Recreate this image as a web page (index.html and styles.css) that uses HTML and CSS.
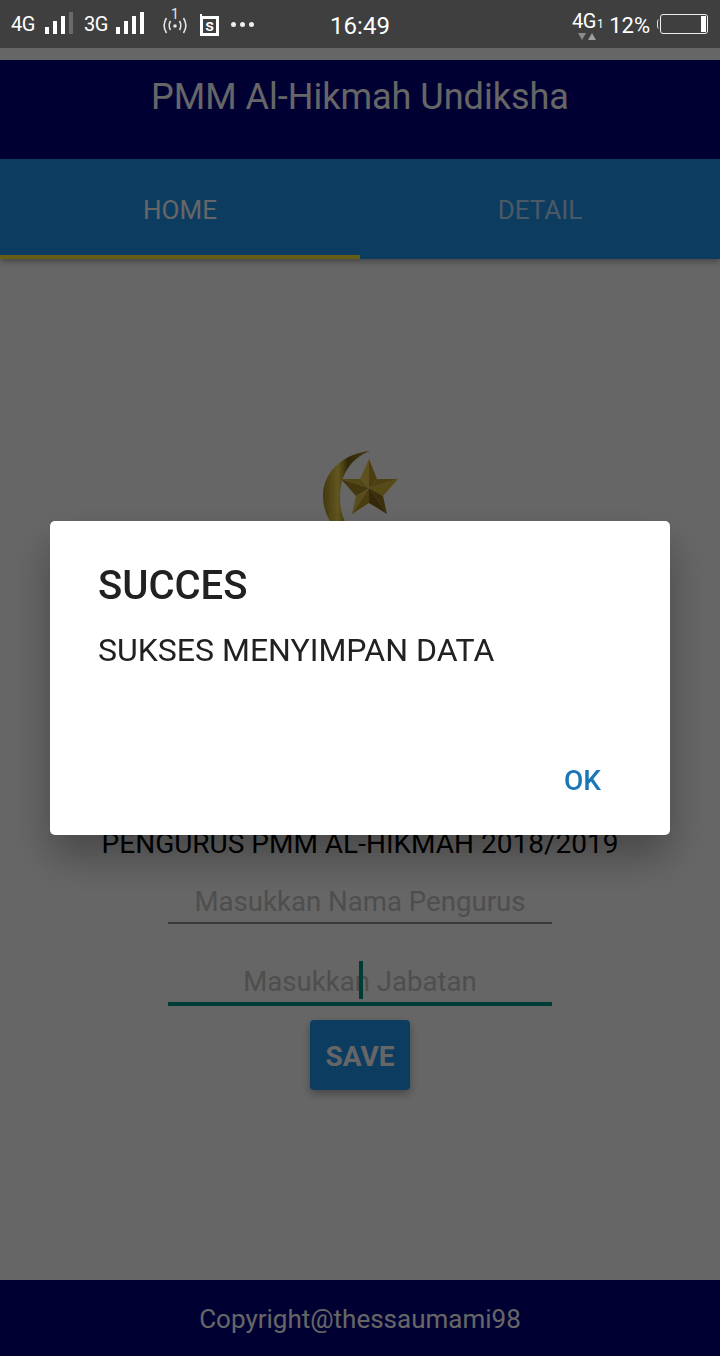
FILE: index.html
```html
<!DOCTYPE html>
<html lang="en">
<head>
    <meta charset="UTF-8">
    <meta name="viewport" content="width=device-width, initial-scale=1.0">
    <title>PMM Al-Hikmah Undiksha</title>
    <link rel="stylesheet" href="styles.css">
</head>
<body>
    <div class="status-bar">
        <div class="status-left">
            <span class="net">4G</span>
            <svg class="bars" width="28" height="24" viewBox="0 0 28 24">
                <rect x="0" y="15" width="4" height="7" fill="#fff"/>
                <rect x="8" y="9" width="4" height="13" fill="#fff"/>
                <rect x="16" y="4" width="4" height="18" fill="#fff"/>
                <rect x="24" y="0" width="4" height="22" fill="#6a6a6a"/>
            </svg>
            <span class="net net-3g">3G</span>
            <svg class="bars" width="28" height="24" viewBox="0 0 28 24">
                <rect x="0" y="15" width="4" height="7" fill="#fff"/>
                <rect x="8" y="9" width="4" height="13" fill="#fff"/>
                <rect x="16" y="4" width="4" height="18" fill="#fff"/>
                <rect x="24" y="0" width="4" height="22" fill="#fff"/>
            </svg>
            <span class="hotspot">
                <svg width="28" height="24" viewBox="0 0 28 24" fill="none" stroke="#e6e6e6" stroke-width="1.6">
                    <path d="M5.5 5a14 14 0 0 0 0 15"/>
                    <path d="M9.5 8a9 9 0 0 0 0 9"/>
                    <path d="M22.5 5a14 14 0 0 1 0 15"/>
                    <path d="M18.5 8a9 9 0 0 1 0 9"/>
                    <circle cx="14" cy="13" r="1.8" fill="#e6e6e6" stroke="none"/>
                </svg>
                <span class="hotspot-num">1</span>
            </span>
            <span class="s-box">s</span>
            <span class="dots"><i></i><i></i><i></i></span>
        </div>
        <div class="status-time">16:49</div>
        <div class="status-right">
            <span class="sim">
                4G<small>1</small>
                <svg class="sim-arrows" width="18" height="8" viewBox="0 0 18 8">
                    <path d="M0 0h8l-4 7z" fill="#8a8a8a"/>
                    <path d="M10 7h8l-4-7z" fill="#a0a0a0"/>
                </svg>
            </span>
            <span class="batt-text">12%</span>
            <span class="batt-tip"></span>
            <span class="batt"><span class="batt-level"></span></span>
        </div>
    </div>

    <div class="page">
        <header class="app-bar">PMM Al-Hikmah Undiksha</header>
        <nav class="tabs">
            <div class="tab active">HOME</div>
            <div class="tab">DETAIL</div>
        </nav>

        <main class="content">
            <svg class="logo" width="100" height="100" viewBox="0 0 100 100">
                <defs>
                    <linearGradient id="moon" x1="0" y1="0" x2="1" y2="0">
                        <stop offset="0" stop-color="#a88c26"/>
                        <stop offset="0.3" stop-color="#f5d94e"/>
                        <stop offset="0.5" stop-color="#7d6618"/>
                        <stop offset="1" stop-color="#b89a28"/>
                    </linearGradient>
                </defs>
                <path d="M60 1C36 3 13 20 13 46s21 49 50 49c-21-5-33-24-33-47S40 9 60 1z" fill="url(#moon)"/>
                <path d="M59 9L59 38 67 29z" fill="#b89a2a"/>
                <path d="M59 9L59 38 50 29z" fill="#e8cb50"/>
                <path d="M88 29L59 38 67 29z" fill="#c4a42c"/>
                <path d="M88 29L59 38 73 46z" fill="#d8b838"/>
                <path d="M77 64L59 38 73 46z" fill="#94781c"/>
                <path d="M77 64L59 38 59 53z" fill="#7f6616"/>
                <path d="M42 64L59 38 59 53z" fill="#b89a2a"/>
                <path d="M42 64L59 38 46 46z" fill="#e0c148"/>
                <path d="M31 29L59 38 46 46z" fill="#a88a22"/>
                <path d="M31 29L59 38 50 29z" fill="#d2b238"/>
            </svg>
            <h2 class="title">PENGURUS PMM AL-HIKMAH 2018/2019</h2>
            <input class="field" type="text" placeholder="Masukkan Nama Pengurus">
            <div class="field-wrap">
                <input class="field field-focus" type="text" placeholder="Masukkan Jabatan">
                <span class="caret"></span>
            </div>
            <button class="save-btn">SAVE</button>
        </main>

        <footer class="footer">Copyright@thessaumami98</footer>
    </div>

    <div class="scrim">
        <div class="dialog">
            <h3 class="dialog-title">SUCCES</h3>
            <p class="dialog-msg">SUKSES MENYIMPAN DATA</p>
            <div class="dialog-actions">
                <button class="ok-btn">OK</button>
            </div>
        </div>
    </div>
</body>
</html>
```

FILE: styles.css
```css
* {
    box-sizing: border-box;
}

body {
    font-family: Roboto, "Liberation Sans", sans-serif;
    margin: 0;
    padding: 0;
    width: 720px;
    height: 1356px;
    overflow: hidden;
    background-color: #fff;
    display: flex;
    flex-direction: column;
}

/* status bar */
.status-bar {
    position: relative;
    z-index: 2;
    height: 48px;
    flex: none;
    background-color: #3f3f3f;
    color: #fff;
    display: grid;
    grid-template-columns: 1fr auto 1fr;
    align-items: center;
}

.status-left {
    display: flex;
    align-items: center;
    padding-left: 11px;
}

.net {
    font-size: 20px;
    width: 26px;
    letter-spacing: -0.5px;
}

.net-3g {
    margin-left: 11px;
    width: 24px;
}

.bars {
    margin-left: 8px;
}

.hotspot {
    position: relative;
    margin-left: 17px;
    width: 28px;
    height: 24px;
    margin-top: 2px;
}

.hotspot-num {
    position: absolute;
    left: 10px;
    top: -7px;
    font-size: 14px;
    color: #e6e6e6;
}

.s-box {
    position: relative;
    margin-left: 11px;
    width: 19px;
    height: 20px;
    margin-top: 3px;
    border: 3px solid #fff;
    font-size: 17px;
    line-height: 12px;
    text-align: center;
    font-weight: 500;
}

.s-box::before {
    content: "";
    position: absolute;
    left: -3px;
    top: -5px;
    width: 2px;
    height: 5px;
    background-color: #fff;
}

.dots {
    margin-left: 12px;
    display: flex;
    gap: 4px;
}

.dots i {
    width: 5px;
    height: 5px;
    border-radius: 50%;
    background-color: #eee;
}

.status-time {
    font-size: 24px;
    padding-top: 3px;
}

.status-right {
    display: flex;
    align-items: center;
    justify-content: flex-end;
    padding-right: 12px;
}

.sim {
    position: relative;
    font-size: 20px;
    letter-spacing: -0.5px;
    margin-top: -6px;
}

.sim small {
    font-size: 12px;
    margin-left: 1px;
}

.sim-arrows {
    position: absolute;
    left: 6px;
    top: 24px;
}

.batt-text {
    font-size: 22px;
    margin-left: 6px;
    padding-top: 3px;
}

.batt-tip {
    width: 3px;
    height: 10px;
    margin-left: 7px;
    border-left: 1px solid #ddd;
    border-radius: 3px 0 0 3px;
}

.batt {
    width: 48px;
    height: 20px;
    border: 1px solid #eee;
    border-radius: 3px;
    display: flex;
    justify-content: flex-end;
    padding: 1px;
}

.batt-level {
    width: 5px;
    background-color: #fff;
}

/* page */
.page {
    flex: 1;
    display: flex;
    flex-direction: column;
    padding-top: 12px;
    min-height: 0;
}

.app-bar {
    height: 99px;
    flex: none;
    background-color: #000080;
    color: #fff;
    font-size: 36px;
    text-align: center;
    padding-top: 16px;
}

.tabs {
    height: 100px;
    flex: none;
    display: flex;
    background-color: #2196f3;
    box-shadow: 0 3px 6px rgba(0, 0, 0, 0.3);
    position: relative;
}

.tab {
    flex: 1;
    font-size: 26px;
    color: rgba(255, 255, 255, 0.7);
    text-align: center;
    padding-top: 36px;
    border-bottom: 4px solid transparent;
}

.tab.active {
    color: #fff;
    border-bottom-color: #ffeb3b;
}

.content {
    flex: 1;
    display: flex;
    flex-direction: column;
    align-items: center;
    justify-content: center;
}

.logo {
    margin-bottom: 278px;
    flex: none;
    filter: blur(0.6px);
}

.title {
    margin: 0;
    font-size: 28px;
    font-weight: 400;
    color: #000;
    line-height: 32px;
    white-space: nowrap;
}

.field {
    display: block;
    width: 384px;
    height: 64px;
    padding: 21px 0 0;
    border: none;
    border-bottom: 2px solid #909090;
    background: none;
    outline: none;
    font-family: inherit;
    font-size: 27.6px;
    text-align: center;
}

.field::placeholder {
    color: #c4c4c4;
    opacity: 1;
}

.field-wrap {
    position: relative;
    margin-top: 16px;
}

.field-focus {
    height: 66px;
    padding-top: 21px;
    border-bottom: 4px solid #009688;
}

.caret {
    position: absolute;
    left: 191px;
    top: 21px;
    width: 4px;
    height: 38px;
    background-color: #009688;
}

.save-btn {
    margin-top: 14px;
    width: 100px;
    height: 70px;
    padding: 3px 0 0;
    font-family: inherit;
    font-size: 28px;
    font-weight: 700;
    color: #fff;
    background-color: #2196f3;
    border: none;
    border-radius: 4px;
    box-shadow: 0 4px 8px rgba(0, 0, 0, 0.3);
}

.footer {
    height: 76px;
    flex: none;
    background-color: #000080;
    color: #fff;
    font-size: 26px;
    text-align: center;
    padding-top: 24px;
}

/* dialog */
.scrim {
    position: fixed;
    left: 0;
    top: 0;
    width: 720px;
    height: 1356px;
    background-color: rgba(0, 0, 0, 0.6);
    display: flex;
    align-items: center;
    justify-content: center;
    z-index: 1;
}

.dialog {
    width: 620px;
    height: 314px;
    background-color: #fff;
    border-radius: 5px;
    box-shadow: 0 22px 40px rgba(0, 0, 0, 0.3);
    padding: 42px 48px 0;
    color: #212121;
}

.dialog-title {
    margin: 0;
    font-size: 40px;
    font-weight: 500;
    line-height: 46px;
}

.dialog-msg {
    margin: 22px 0 0;
    font-size: 32px;
    line-height: 38px;
}

.dialog-actions {
    display: flex;
    justify-content: flex-end;
    margin-top: 95px;
    padding-right: 21px;
}

.ok-btn {
    padding: 0;
    border: none;
    background: none;
    font-family: inherit;
    font-size: 28px;
    font-weight: 500;
    color: #1976b9;
    line-height: 34px;
}
```
